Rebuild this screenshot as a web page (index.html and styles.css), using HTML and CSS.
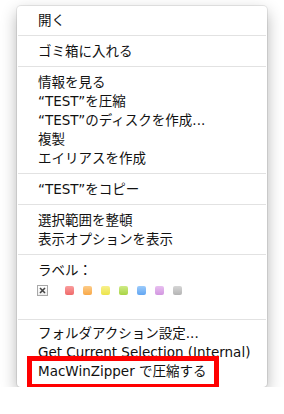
FILE: index.html
```html
<!DOCTYPE html>
<html lang="ja">
<head>
  <meta charset="UTF-8">
  <meta name="viewport" content="width=device-width, initial-scale=1.0">
  <title>コンテキストメニュー</title>
  <link rel="stylesheet" href="styles.css">
</head>
<body>
  <div class="menu">
    <div class="item">開く</div>
    <div class="sep"></div>
    <div class="item">ゴミ箱に入れる</div>
    <div class="sep"></div>
    <div class="item">情報を見る</div>
    <div class="item">“TEST”を圧縮</div>
    <div class="item">“TEST”のディスクを作成...</div>
    <div class="item">複製</div>
    <div class="item">エイリアスを作成</div>
    <div class="sep"></div>
    <div class="item">“TEST”をコピー</div>
    <div class="sep"></div>
    <div class="item">選択範囲を整頓</div>
    <div class="item">表示オプションを表示</div>
    <div class="sep"></div>
    <div class="item">ラベル：</div>
    <div class="labels">
      <span class="none">
        <svg width="7" height="7" viewBox="0 0 7 7"><path d="M1 1 L6 6 M6 1 L1 6" stroke="#444" stroke-width="1.6"/></svg>
      </span>
      <span class="dot red"></span>
      <span class="dot orange"></span>
      <span class="dot yellow"></span>
      <span class="dot green"></span>
      <span class="dot blue"></span>
      <span class="dot purple"></span>
      <span class="dot gray"></span>
    </div>
    <div class="sep last"></div>
    <div class="item">フォルダアクション設定...</div>
    <div class="item">Get Current Selection (Internal)</div>
    <div class="item marked">MacWinZipper で圧縮する<span class="highlight"></span></div>
  </div>
</body>
</html>
```

FILE: styles.css
```css
body {
  margin: 0;
  background: #fff;
  font-family: 'DejaVu Sans', 'Noto Sans CJK JP', sans-serif;
}

.menu {
  width: 250px;
  height: 381px;
  box-sizing: border-box;
  margin: 6px 0 0 17px;
  padding-top: 5px;
  background: #fff;
  border-radius: 4px;
  box-shadow: 0 6px 16px rgba(0, 0, 0, 0.3), 0 0 0 1px rgba(0, 0, 0, 0.08);
}

.item {
  height: 19px;
  line-height: 19px;
  padding-left: 21px;
  font-size: 13.5px;
  color: #111;
  white-space: nowrap;
}

.sep {
  height: 1px;
  margin: 5px 1px 6px;
  background: #e2e2e2;
}

.sep.last {
  margin-bottom: 4px;
}

.labels {
  height: 34px;
  box-sizing: border-box;
  padding: 5px 0 0 20px;
  display: flex;
  align-items: flex-start;
}

.none {
  width: 11px;
  height: 11px;
  box-sizing: border-box;
  border: 1px solid #a8a8a8;
  background: linear-gradient(#fff, #eee);
  display: flex;
  align-items: center;
  justify-content: center;
  margin-right: 17px;
}

.dot {
  width: 9px;
  height: 9px;
  margin: 1px 9px 0 0;
  border-radius: 2px;
}

.red { background: linear-gradient(#fa9c9c, #ef6a6a); }
.orange { background: linear-gradient(#fdcc88, #f8a848); }
.yellow { background: linear-gradient(#f8f08c, #ece44a); }
.green { background: linear-gradient(#cfeb86, #a8d444); }
.blue { background: linear-gradient(#9ccbfb, #62a6f2); }
.purple { background: linear-gradient(#e8bff0, #d296e0); }
.gray { background: linear-gradient(#d6d6d6, #b4b4b4); }

.marked {
  position: relative;
}

.highlight {
  position: absolute;
  left: 10px;
  top: -6px;
  width: 192px;
  height: 33px;
  box-sizing: border-box;
  border: 5px solid #ff0000;
}
```
